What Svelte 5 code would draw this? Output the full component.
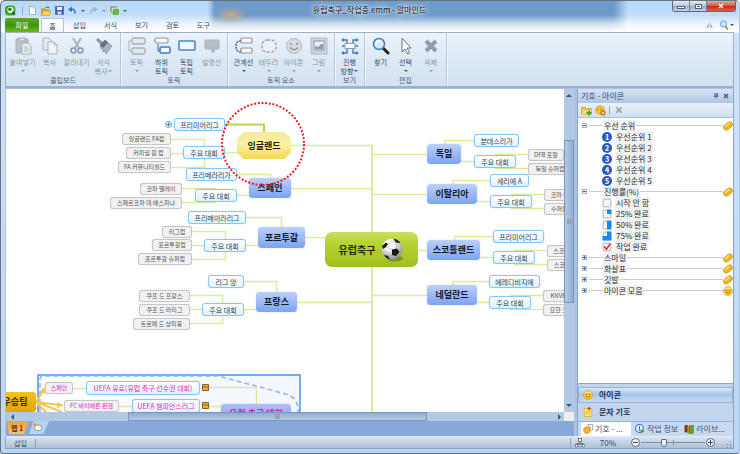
<script lang="ts">
  type Node = { t: string; k: string; x: number; y: number; w: number; h: number }

  let zoom = $state(35)
  let tab = $state('홈')

  const menus = ['삽입', '서식', '보기', '검토', '도구']

  const groups = [
    { label: '클립보드', cell: 27, items: [
      { icon: 'paste', lines: ['붙여넣기'], arrow: true, off: true },
      { icon: 'copy', lines: ['복사'], off: true },
      { icon: 'cut', lines: ['잘라내기'], off: true },
      { icon: 'brush', lines: ['서식', '복사'], arrow: true, off: true },
    ] },
    { label: '토픽', cell: 25, items: [
      { icon: 'topic', lines: ['토픽'], arrow: true, off: true },
      { icon: 'subtopic', lines: ['하위', '토픽'] },
      { icon: 'free', lines: ['독립', '토픽'] },
      { icon: 'callout', lines: ['설명선'], off: true },
    ] },
    { label: '토픽 요소', cell: 25, items: [
      { icon: 'relation', lines: ['관계선'], arrow: true },
      { icon: 'outline', lines: ['테두리'], arrow: true, off: true },
      { icon: 'smile', lines: ['아이콘'], arrow: true, off: true },
      { icon: 'image', lines: ['그림'], arrow: true, off: true },
    ] },
    { label: '보기', cell: 25, items: [
      { icon: 'direction', lines: ['진행', '방향'], arrow: true },
    ] },
    { label: '편집', cell: 25, items: [
      { icon: 'find', lines: ['찾기'] },
      { icon: 'select', lines: ['선택'], arrow: true },
      { icon: 'delete', lines: ['삭제'], arrow: true, off: true },
    ] },
  ] as { label: string; cell: number; items: { icon: string; lines: string[]; arrow?: boolean; off?: boolean }[] }[]

  const n = (k: string, t: string, x: number, y: number, w: number, h: number): Node => ({ t, k, x, y, w, h })

  const nodes: Node[] = [
    n('sub', '프리미어리그', 174, 118, 51, 13),
    n('leaf', '잉글랜드 FA컵', 122, 133, 49, 12),
    n('leaf', '커피월 원 컵', 126, 147, 45, 12),
    n('leaf', 'FA 커뮤니티쉴드', 118, 161, 53, 12),
    n('sub', '주요 대회', 183, 146, 42, 13),
    n('topic hot', '잉글랜드', 237, 132, 54, 27),

    n('sub', '프리메라리가', 186, 168, 51, 13),
    n('topic', '스페인', 249, 178, 42, 20),
    n('leaf', '코파 델레이', 140, 183, 42, 12),
    n('leaf', '스페르코파 데 에스파냐', 110, 197, 72, 12),
    n('sub', '주요 대회', 195, 189, 42, 13),

    n('sub', '프리메이라리그', 188, 211, 58, 13),
    n('leaf', '리그컵', 162, 226, 30, 12),
    n('leaf', '포르투갈컵', 152, 239, 40, 12),
    n('leaf', '포르투갈 슈퍼컵', 138, 253, 54, 12),
    n('sub', '주요 대회', 204, 239, 42, 13),
    n('topic', '포르투갈', 258, 227, 47, 21),

    n('sub', '리그 앙', 208, 275, 36, 13),
    n('leaf', '쿠프 드 프랑스', 139, 290, 51, 12),
    n('leaf', '쿠프 드 라리그', 139, 304, 51, 12),
    n('leaf', '트로페 드 샹피옹', 133, 318, 57, 12),
    n('sub', '주요 대회', 202, 303, 42, 13),
    n('topic', '프랑스', 256, 292, 41, 20),

    n('sub', '분데스리가', 474, 134, 45, 13),
    n('topic', '독일', 427, 144, 34, 20),
    n('sub', '주요 대회', 474, 155, 42, 13),
    n('leaf', 'DFB 포칼', 528, 149, 36, 12),
    n('leaf', '독일 슈퍼컵', 528, 163, 44, 12),

    n('sub', '세리에 A', 490, 174, 39, 13),
    n('topic', '이탈리아', 427, 184, 50, 20),
    n('sub', '주요 대회', 490, 195, 42, 13),
    n('leaf', '코파 이탈리아', 544, 189, 48, 12),
    n('leaf', '수퍼컵 이탈리아', 544, 203, 54, 12),

    n('sub', '프리미어리그', 493, 230, 51, 13),
    n('topic', '스코틀랜드', 427, 240, 53, 20),
    n('sub', '주요 대회', 493, 251, 42, 13),
    n('leaf', '스코티시컵', 547, 245, 40, 12),
    n('leaf', '스코티시리그컵', 547, 259, 52, 12),

    n('sub', '에레디비지에', 489, 275, 51, 13),
    n('topic', '네덜란드', 427, 285, 50, 20),
    n('sub', '주요 대회', 489, 296, 42, 13),
    n('leaf', 'KNVB컵', 543, 290, 36, 12),
    n('leaf', '요한 크루이프', 543, 304, 48, 12),

    n('leaf pink', '스페인', 45, 382, 28, 12),
    n('sub pink', 'UEFA 유로(유럽 축구 선수권 대회)', 86, 381, 114, 14),
    n('leaf pink', 'FC 바이에른 뮌헨', 64, 400, 55, 12),
    n('sub pink', 'UEFA 챔피언스리그', 132, 399, 68, 14),
    n('topic violet', '유럽 축구 대회', 221, 404, 70, 20),
    n('winner', '우승팀', -6, 392, 42, 20),
  ]

  const links = [
    'M171 139.500H204.500V167.500H171M171 153.500H183M225 152.500H237',
    'M237 174.500H270.500V178M237 195.500H249M182 188.500H216M182 202.500H216',
    'M246 217.500H281.500V227M246 245.500H258M192 231.500H225.500V259.500H192M192 245.500H204',
    'M244 281.500H276.500V292M244 309.500H256M190 295.500H222.500V323.500H190M190 309.500H202',
    'M291 145.500H372M291 188.500H372M305 237.500H325M297 302.500H372',
    'M372 154.500H427M372 194.500H427M418 250.500H427M372 295.500H427',
    'M444.500 144V140.500H474M461 161.500H474M495 154.500H528M495 168.500H528',
    'M452.500 184V180.500H490M477 201.500H490M511 194.500H544M511 208.500H544',
    'M454.500 240V236.500H493M480 257.500H493M514 250.500H547M514 264.500H547',
    'M452.500 285V281.500H489M477 302.500H489M510 295.500H543M510 309.500H543',
    'M73 388.500H86M208 387.500H256.500V404M119 406.500H132M208 406.500H221',
  ].join('')

  const tree = [
    { label: '우선 순위', open: true, end: 'clip', items: ['1', '2', '3', '4', '5'].map((v) => ({ icon: 'num', v, label: '우선순위 ' + v })) },
    { label: '진행률(%)', open: true, end: 'clip', items: [
      { icon: 'p0', v: '', label: '시작 안 함' },
      { icon: 'p25', v: '', label: '25% 완료' },
      { icon: 'p50', v: '', label: '50% 완료' },
      { icon: 'p75', v: '', label: '75% 완료' },
      { icon: 'done', v: '', label: '작업 완료' },
    ] },
    { label: '스마일', open: false, end: 'clip', items: [] },
    { label: '화살표', open: false, end: 'clip', items: [] },
    { label: '깃발', open: false, end: 'clip', items: [] },
    { label: '아이콘 모음', open: false, end: 'face', items: [] },
  ]

  const box = '<rect x="2" y="2" width="14" height="14" rx="1" fill="#f4f5f7" stroke="#9aa5b1" stroke-width="1.500"/>'

  // all glyphs are drawn on an 18 x 18 grid
  const icons: Record<string, string> = {
    paste: '<rect x="2" y="2" width="12" height="14" rx="1" fill="#b9c1ca" stroke="#a4adb8"/><rect x="5" y="1" width="6" height="3" fill="#dfe4ea" stroke="#9fa9b4"/><path d="M8 6h6l3 3v8H8z" fill="#e9edf2" stroke="#a9b3be"/><path d="M10 10h4M10 12h5M10 14h5" stroke="#b4bdc7"/>',
    copy: '<path d="M2 1h6l3 3v9H2z" fill="#e4e9ef" stroke="#a9b3be"/><path d="M7 5h6l3 3v9H7z" fill="#f0f3f6" stroke="#a9b3be"/><path d="M13 5v3h3" fill="none" stroke="#a9b3be"/>',
    cut: '<path d="M5 1l6 10M13 1L7 11" stroke="#adb7c3" stroke-width="2.200"/><circle cx="5.500" cy="13.500" r="2.500" fill="none" stroke="#8799ae" stroke-width="1.500"/><circle cx="12.500" cy="13.500" r="2.500" fill="none" stroke="#8799ae" stroke-width="1.500"/>',
    brush: '<path d="M1 3l2-2 5 4-2 3z" fill="#8d99a6"/><path d="M5 8l5-5 7 6-6 8-1-3-2 1 0-3-2 0z" fill="#a9b5c2" stroke="#8592a0" stroke-width=".8"/><path d="M5 8l5-5 3 2.500-5 5.500z" fill="#5f7082"/>',
    topic: '<path d="M4 4H1v10h3" fill="none" stroke="#a6b2bf"/><rect x="4" y="1" width="13" height="6" rx="1.500" fill="#e3e8ed" stroke="#a8b1bb" stroke-width="1.300"/><rect x="4" y="11" width="13" height="6" rx="1.500" fill="#e3e8ed" stroke="#a8b1bb" stroke-width="1.300"/>',
    subtopic: '<path d="M5 7v7h3" fill="none" stroke="#4b83c4" stroke-width="1.200"/><rect x="2" y="1" width="13" height="5" rx="1.500" fill="#f7f7f4" stroke="#92979b" stroke-width="1.200"/><rect x="7" y="10" width="10" height="6" rx="1.500" fill="#f4faff" stroke="#3f7fcd" stroke-width="1.600"/>',
    free: '<rect x="1" y="4" width="16" height="9" rx="1" fill="#f2f7fd" stroke="#4e83c6" stroke-width="1.600"/>',
    callout: '<path d="M3 3h12a1 1 0 0 1 1 1v7a1 1 0 0 1-1 1h-3l-2 4-2-4H3a1 1 0 0 1-1-1V4a1 1 0 0 1 1-1z" fill="#b5bec8" stroke="#a8b2bd"/>',
    relation: '<path d="M6 4C2 4 1 6 1 9s1 6 5 6" fill="none" stroke="#3672b9" stroke-width="1.600" stroke-dasharray="2 1"/><rect x="6" y="1" width="11" height="5" rx="1" fill="#f8f8f5" stroke="#8e9498" stroke-width="1.200"/><rect x="6" y="11" width="11" height="5" rx="1" fill="#f8f8f5" stroke="#8e9498" stroke-width="1.200"/>',
    outline: '<rect x="2" y="3" width="14" height="12" rx="5" fill="#edf1f5" stroke="#9aa9ba" stroke-width="1.500" stroke-dasharray="3 1.500"/>',
    smile: '<circle cx="9" cy="9" r="7.500" fill="#d5dae0" stroke="#b2bac3"/><circle cx="6" cy="7" r="1" fill="#8e98a3"/><circle cx="12" cy="7" r="1" fill="#8e98a3"/><path d="M5 10.500q4 4.500 8 0" fill="none" stroke="#8e98a3" stroke-width="1.300"/>',
    image: '<rect x="1" y="1" width="16" height="16" fill="#cdd3da" stroke="#b3bbc4"/><rect x="4" y="4" width="10" height="9" fill="#eef1f4" stroke="#8f9aa6"/><path d="M5 12V9l3 1 3-3 2 0v5z" fill="#8d9aa8"/>',
    direction: '<path d="M5 9H1M13 9h4M6 6V3H2M12 6V3h4M6 12v4H2M12 12v4h4" fill="none" stroke="#3d7ac2" stroke-width="1.400"/><path d="M3 1v4L0 3zM15 1v4l3-2zM3 14v4l-3-2zM15 14v4l3-2z" fill="#3d7ac2"/><rect x="4" y="6.500" width="10" height="5" fill="#fbfaf4" stroke="#98a1a8"/>',
    find: '<path d="M11 11l5 5" stroke="#222" stroke-width="3" stroke-linecap="round"/><circle cx="7" cy="7" r="5.500" fill="#d6ecfd" stroke="#437fbe" stroke-width="1.500"/><path d="M4 6q2-3 5-2" stroke="#fff" stroke-width="1.500" fill="none"/>',
    select: '<path d="M5 1v14l3-3 2.500 5 2-1-2.300-5H14z" fill="#fff" stroke="#66717c"/>',
    delete: '<path d="M4 4l10 10M14 4L4 14" stroke="#8b9db1" stroke-width="4"/>',
    logo: '<rect x="0" y="1" width="17" height="16" rx="6" fill="#39a32e"/><circle cx="9" cy="8" r="5" fill="#fff"/><circle cx="8" cy="7" r="3" fill="#2b7e2a"/><path d="M12 11l4 5" stroke="#14551c" stroke-width="3"/>',
    fresh: '<path d="M3 1h8l4 4v12H3z" fill="#fff" stroke="#8a98a8" stroke-width="1.300"/><path d="M11 1v4h4" fill="none" stroke="#8a98a8"/>',
    open: '<path d="M1 5h6l2 2h6v9H1z" fill="#e6a11f" stroke="#b97e14"/><path d="M4 9h14l-3 8H1z" fill="#ffd562" stroke="#cf9523"/><path d="M8 4q4-4 7 0" fill="none" stroke="#3d7dd0" stroke-width="2"/>',
    save: '<path d="M1 1h16v16H1z" fill="#3f5fbb" stroke="#2c428f"/><rect x="4" y="2" width="10" height="6" fill="#f1f4fc"/><rect x="5" y="11" width="8" height="6" fill="#cfd9f2"/>',
    undo: '<path d="M5 8q9-5 9 7" fill="none" stroke="#2f74cc" stroke-width="3.200"/><path d="M0 7l8-6v11z" fill="#2f74cc"/>',
    redo: '<path d="M13 8q-9-5-9 7" fill="none" stroke="#9fb2c6" stroke-width="3.200"/><path d="M18 7l-8-6v11z" fill="#9fb2c6"/>',
    layers: '<rect x="1" y="1" width="11" height="10" rx="1" fill="#f2a644" stroke="#a96d20"/><rect x="3" y="4" width="11" height="10" fill="#e4ecf5" stroke="#7890a9"/><rect x="6" y="7" width="11" height="10" rx="1" fill="#6cba3e" stroke="#3c8a24"/>',
    p0: box,
    p25: box + '<path d="M9 1h8v8H9z" fill="#168af2"/>',
    p50: box + '<path d="M9 1h8v16H9z" fill="#168af2"/>',
    p75: box + '<path d="M9 1h8v16H1V9h8z" fill="#168af2"/>',
    done: box + '<path d="M4 8l4 5 7-10" fill="none" stroke="#e02c1b" stroke-width="2.800"/>',
    clip: '<g transform="rotate(-38 9 9)"><rect x="0" y="4" width="18" height="10" rx="5" fill="#f0b51d" stroke="#c68a0c"/><path d="M4 7h10" stroke="#fff2ad" stroke-width="2"/></g>',
    face: '<circle cx="9" cy="9" r="8" fill="#f8c831" stroke="#c98f12"/><path d="M3 6q6-5 12 0" stroke="#fff0a8" stroke-width="2" fill="none"/><circle cx="6" cy="8" r="1.200" fill="#8a5a08"/><circle cx="12" cy="8" r="1.200" fill="#8a5a08"/><path d="M5 11q4 4 8 0" fill="none" stroke="#8a5a08" stroke-width="1.300"/>',
    folder: '<path d="M1 4h6l2 2h8v9H1z" fill="#edc04a" stroke="#b98a1c"/><path d="M3 8h14l-2 7H1z" fill="#fbdc79"/><path d="M13 9v8M9 13h8" stroke="#3ba32b" stroke-width="3"/>',
    faceAdd: '<circle cx="8" cy="8" r="7" fill="#f8c831" stroke="#c98f12"/><path d="M4 7h2M9 7h2" stroke="#8a5a08" stroke-width="1.500"/><circle cx="13" cy="13" r="4" fill="#f08a1c" stroke="#b55b08"/><path d="M13 11v4M11 13h4" stroke="#fff"/>',
    note: '<rect x="2" y="3" width="14" height="14" fill="#fae36f" stroke="#c7a32d"/><path d="M5 8h8M5 11h8" stroke="#c7a32d"/><circle cx="11" cy="3" r="2.500" fill="#d63a28"/>',
    symbols: '<rect x="9" y="1" width="8" height="10" fill="#fff" stroke="#777"/><path d="M13 3v6" stroke="#b33"/><circle cx="7" cy="11" r="6" fill="#f5b52a" stroke="#b57c10"/>',
    info: '<circle cx="8" cy="8" r="7" fill="#e7f3fd" stroke="#2f78bd" stroke-width="2"/><path d="M8 4v8" stroke="#2f78bd" stroke-width="2"/><path d="M10 9l7 4-7 4z" fill="#39a32e"/>',
    books: '<rect x="1" y="2" width="6" height="13" fill="#7a3520"/><rect x="6" y="4" width="5" height="13" fill="#e67c1f"/><rect x="10" y="3" width="7" height="14" fill="#58a832" stroke="#3c7b22"/>',
    org: '<path d="M9 6v5M3 13v-3h12v3" fill="none" stroke="#4a5868" stroke-width="1.300"/><rect x="6" y="1" width="6" height="5" fill="#fff" stroke="#4a5868" stroke-width="1.300"/><rect x="1" y="12" width="4" height="4" fill="#fff" stroke="#4a5868"/><rect x="7" y="12" width="4" height="4" fill="#fff" stroke="#4a5868"/><rect x="13" y="12" width="4" height="4" fill="#fff" stroke="#4a5868"/>',
    lens: '<path d="M11 11l5 6" stroke="#d08a2e" stroke-width="3.500"/><circle cx="8" cy="7" r="5.500" fill="#c4e8fb" stroke="#6ba3cc" stroke-width="1.800"/>',
    up: '<path d="M3 10l6-6 6 6v4l-6-4-6 4z" fill="#fff" stroke="#56616d" stroke-width="1.500"/>',
    x: '<path d="M3 3l12 12M15 3L3 15" stroke="currentColor" stroke-width="3.500"/>',
    pin: '<path d="M5 2h8v8H5zM2 10h14M9 10v7" fill="none" stroke="currentColor" stroke-width="2"/><path d="M10 2h3v8h-3z" fill="currentColor"/>',
    addMap: '<rect x="4" y="5" width="12" height="9" rx="4" fill="#f2f5fa" stroke="#65778f"/><path d="M5 1v7M1 4.500h8" stroke="#f19b25" stroke-width="2"/>',
  }
</script>

{#snippet icon(name: string, size: number)}
  <svg class="icon" viewBox="0 0 18 18" width={size} height={size} aria-hidden="true">{@html icons[name]}</svg>
{/snippet}

<div class="window">
  <header class="titlebar">
    <div class="quick">
      {@render icon('logo', 11)}
      <i class="bar"></i>
      <button aria-label="새로 만들기">{@render icon('fresh', 9)}</button>
      <button aria-label="열기">{@render icon('open', 10)}</button>
      <button aria-label="저장">{@render icon('save', 9)}</button>
      <button aria-label="실행 취소">{@render icon('undo', 9)}<i class="caret"></i></button>
      <button aria-label="다시 실행">{@render icon('redo', 9)}<i class="caret pale"></i></button>
      <button aria-label="맵 복사">{@render icon('layers', 9)}<i class="caret"></i></button>
    </div>
    <h1>유럽축구_작업중.emm - 알마인드</h1>
    <div class="controls">
      <button aria-label="최소화"><i class="min"></i></button>
      <button aria-label="최대화"><i class="max"></i></button>
      <button class="close" aria-label="닫기">{@render icon('x', 6)}</button>
    </div>
  </header>

  <nav class="tabs">
    <button class="file">파일</button>
    <button class="home" class:active={tab === '홈'} onclick={() => (tab = '홈')}>홈</button>
    {#each menus as m}
      <button class:active={tab === m} onclick={() => (tab = m)}>{m}</button>
    {/each}
    <span class="help">
      <button aria-label="리본 최소화">{@render icon('up', 7)}</button>
      <button aria-label="도움말">{@render icon('lens', 10)}<i class="caret"></i></button>
    </span>
  </nav>

  <section class="ribbon">
    {#each groups as g}
      <div class="group">
        <div class="tools">
          {#each g.items as it}
            <button class="tool" class:off={it.off} style:width={g.cell + 'px'}>
              {@render icon(it.icon, 18)}
              {#each it.lines as line, i}
                <span>{line}{#if i === 1 && it.arrow}<i class="caret"></i>{/if}</span>
              {/each}
              {#if it.arrow && it.lines.length === 1}<span><i class="caret"></i></span>{/if}
            </button>
          {/each}
        </div>
        <div class="caption">{g.label}</div>
      </div>
    {/each}
  </section>

  <main class="work">
    <div class="editor">
      <div class="view">
        <div class="canvas">
          <div class="sheet">
            <svg class="layer" width="740" height="454" viewBox="0 0 740 454" fill="none">
              <defs>
                <linearGradient id="sel" x2="1"><stop offset="0" stop-color="#fff" /><stop offset="1" stop-color="#f1f7fe" /></linearGradient>
              </defs>
              <rect x="38" y="375" width="262" height="60" fill="url(#sel)" stroke="#4593ee" stroke-width="1.500" />
              <path d="M40 412V379Q40 376 43 376H218L286 394Q299 398 298 412" stroke="#92b5d7" stroke-width="1.500" stroke-dasharray="5 3" />
              <path d={links} stroke="#dcea9b" stroke-width="1.500" />
              <path d="M372 145V420" stroke="#dcea9b" stroke-width="2" />
              <path d="M225 124.500H264V132" stroke="#b5d944" stroke-width="2" />
              <g stroke="#f5c64e" stroke-width="2">
                <path d="M36 402L43 391M36 402L60 405M36 402L62 412M36 402L48 414" />
                <path d="M40 390L46 387L45 394zM57 402L64 405L57 408z" fill="#f5c64e" stroke="none" />
              </g>
              <circle cx="168.500" cy="124.500" r="3" fill="#eef8fd" stroke="#62add2" />
              <path d="M166.500 124.500h4M168.500 122.500v4" stroke="#3c8ebb" />
              <g fill="#e9b24a" stroke="#8f5f20">
                <path d="M202.500 384.500h6v6h-6zM202.500 402.500h6v6h-6z" />
                <path d="M203 387h5M203 405h5" />
              </g>
            </svg>

            {#each nodes as d}
              <div class="node {d.k}" style:left={d.x + 'px'} style:top={d.y + 'px'} style:width={d.w + 'px'} style:height={d.h + 'px'}>{d.t}</div>
            {/each}

            <div class="root">
              유럽축구
              <svg width="24" height="24" viewBox="0 0 24 24" aria-hidden="true">
                <defs>
                  <radialGradient id="ball" cx=".4" cy=".3" r=".7"><stop offset=".3" stop-color="#fff" /><stop offset="1" stop-color="#8c9094" /></radialGradient>
                  <clipPath id="ballClip"><circle cx="12" cy="11" r="10.500" /></clipPath>
                </defs>
                <ellipse cx="15" cy="20.500" rx="8" ry="3" fill="#5d7311" opacity=".6" />
                <circle cx="12" cy="11" r="10.500" fill="url(#ball)" />
                <g clip-path="url(#ballClip)">
                  <path d="M12 11.500L17 10.500L19.500 14L16 18L12 17zM13 0L19 1.500L20 5L16 4.500zM2 8L6 4.500L8 6L6 9L3 11zM4 17L8 18L10 21.500L6 20z" fill="#16181a" />
                  <path d="M12 11.500L6 9M17 10.500L16 4.500M8 6L13 3L16 4.500M12 17L8 18M19.500 14L22 13" fill="none" stroke="#9da0a3" stroke-width=".6" />
                </g>
              </svg>
            </div>

            <svg class="layer" width="740" height="454" viewBox="0 0 740 454" fill="none">
              <circle cx="263" cy="144" r="41" stroke="#ee1c24" stroke-width="2" stroke-dasharray="2 1.680" />
            </svg>
          </div>
        </div>
        <div class="vscroll"><i class="arrow up"></i><div class="rail"><div class="thumb"></div></div><i class="arrow down"></i></div>
      </div>
      <div class="hscroll">
        <i class="arrow left"></i><div class="rail"><div class="thumb"></div></div><i class="arrow right"></i><div class="corner"></div>
      </div>
      <div class="maps">
        <button class="map">맵 1</button>
        <button class="addmap" aria-label="맵 추가">{@render icon('addMap', 11)}</button>
      </div>
    </div>

    <aside class="panel">
      <div class="phead">
        <span>기호 - 아이콘</span>
        <button aria-label="고정">{@render icon('pin', 6)}</button>
        <button aria-label="닫기">{@render icon('x', 6)}</button>
      </div>
      <div class="pbar">
        <button aria-label="폴더 추가">{@render icon('folder', 11)}</button>
        <button aria-label="아이콘 추가">{@render icon('faceAdd', 11)}</button>
        <i class="bar"></i>
        <button class="gray" aria-label="삭제">{@render icon('x', 8)}</button>
      </div>
      <ul class="tree">
        {#each tree as g}
          <li>
            <div class="branch">
              <i class="box" class:plus={!g.open}></i><i class="stub"></i><span>{g.label}</span><i class="rule"></i>
              {@render icon(g.end, 10)}
            </div>
            {#each g.items as it}
              <div class="item">
                {#if it.icon === 'num'}<b>{it.v}</b>{:else}{@render icon(it.icon, 10)}{/if}
                <span>{it.label}</span>
              </div>
            {/each}
          </li>
        {/each}
      </ul>
      <div class="stack">
        <button class="on">{@render icon('face', 10)}아이콘</button>
        <button>{@render icon('note', 10)}문자 기호</button>
      </div>
      <div class="ptabs">
        <button class="on">{@render icon('symbols', 10)}기호 - ...</button>
        <button>{@render icon('info', 10)}작업 정보</button>
        <button>{@render icon('books', 10)}라이브...</button>
      </div>
    </aside>
  </main>

  <footer class="status">
    <span class="mode">삽입</span>
    <div class="zoom">
      {@render icon('org', 10)}
      <label for="zoom">70%</label>
      <button aria-label="축소"><i class="h"></i></button>
      <input id="zoom" type="range" min="0" max="100" bind:value={zoom} />
      <button aria-label="확대"><i class="h"></i><i class="v"></i></button>
      <svg class="grip" width="7" height="7" viewBox="0 0 7 7" aria-hidden="true">
        <path d="M5 0h1v1h-1zM5 3h1v1h-1zM5 6h1v1h-1zM2 3h1v1h-1zM2 6h1v1h-1z" fill="#71849c" />
      </svg>
    </div>
  </footer>
</div>

<style>
  :global(body) {
    margin: 0;
  }
  .window {
    display: flex;
    flex-direction: column;
    box-sizing: border-box;
    min-height: 100vh;
    padding: 0 5px 4px 4px;
    border: 1px solid #67727f;
    border-right-color: #a9c4e2;
    border-radius: 5px 5px 3px 3px;
    font: 7px/8px 'Noto Sans CJK KR', sans-serif;
    color: #33496a;
    background:
      radial-gradient(closest-side, #c0a98c, transparent) 213px 5px / 34px 18px no-repeat,
      linear-gradient(to bottom, transparent 0 14px, #ffffffb0 23px, #fff 31px, transparent 32px),
      linear-gradient(to right, transparent 28%, #6d9ac9 29% 83%, transparent 85%) 0 0 / 100% 32px no-repeat,
      linear-gradient(to bottom, #b7dafb 0, #cfe3f8 32px, #b8d6f5 100%);
  }
  button {
    display: flex;
    align-items: center;
    margin: 0;
    padding: 0;
    border: none;
    background: none;
    font: inherit;
    color: inherit;
  }
  .icon {
    display: block;
    flex: none;
  }
  .caret {
    display: inline-block;
    flex: none;
    margin-left: 4px;
    border: 2px solid transparent;
    border-top-color: #46566a;
    border-bottom: none;
  }
  .pale {
    opacity: .5;
  }
  .bar {
    width: 1px;
    height: 8px;
    background: #8fa6c0;
  }

  .titlebar {
    display: grid;
    grid-template-columns: 1fr auto 1fr;
    height: 17px;
  }
  .quick {
    display: flex;
    align-items: center;
    gap: 4px;
    padding-top: 1px;
  }
  .quick .bar {
    margin: 0 1px 0 2px;
  }
  h1 {
    margin: 0;
    font-size: 8px;
    font-weight: 400;
    line-height: 18px;
    color: #10151c;
    text-shadow: 0 0 3px #fff, 0 0 6px #fff, 0 0 8px #fff;
  }
  .controls {
    display: flex;
    justify-self: end;
    height: 11px;
    margin-right: -2px;
    border: 1px solid #586a80;
    border-top: none;
    border-radius: 0 0 3px 3px;
    box-sizing: border-box;
    overflow: hidden;
  }
  .controls button {
    justify-content: center;
    width: 17px;
    border-right: 1px solid #71849b;
    background: linear-gradient(#e2ebf5, #bccbdc 45%, #98abc2 50%, #c3d3e4);
  }
  .controls .close {
    width: 28px;
    border: none;
    color: #fff;
    background: linear-gradient(#e9a99c, #d3614e 45%, #b92c17 50%, #d9624a);
  }
  .min {
    width: 6px;
    height: 1px;
    margin-top: 3px;
    border: 1px solid #556270;
    background: #fff;
  }
  .max {
    width: 3px;
    height: 1px;
    border: 1px solid #fff;
    outline: 1px solid #556270;
    background: #556270;
  }

  .tabs {
    display: flex;
    height: 14px;
  }
  .tabs > button {
    justify-content: center;
    width: 31px;
  }
  .tabs .file {
    width: 34px;
    margin-right: 2px;
    border-radius: 2px 2px 0 0;
    color: #fff;
    background: linear-gradient(#5cab22, #3f9310 50%, #6cb81c);
  }
  .tabs .home {
    width: 23px;
  }
  .tabs .active {
    border: 1px solid #a9c3df;
    border-bottom: none;
    border-radius: 2px 2px 0 0;
    box-sizing: border-box;
    background: linear-gradient(#fff, #f0f6fd);
  }
  .help {
    display: flex;
    gap: 6px;
    margin-left: auto;
  }
  .help .caret {
    margin-left: 1px;
  }

  .ribbon {
    display: flex;
    box-sizing: border-box;
    height: 56px;
    border: 1px solid #9db1c8;
    border-width: 1px 1px 2px;
    background: linear-gradient(#ecf4fd, #dce8f5 50%, #d4e1f0);
  }
  .group {
    display: flex;
    flex-direction: column;
    justify-content: space-between;
    padding: 4px 3px 1px;
    border-right: 1px solid #b4c7dd;
    box-shadow: 1px 0 #f3f8fd;
  }
  .group:nth-child(4) {
    padding-left: 2px;
    padding-right: 2px;
  }
  .tools {
    display: flex;
    align-items: flex-start;
  }
  .tool {
    flex-direction: column;
    white-space: nowrap;
  }
  .tool .icon {
    margin-bottom: 2px;
  }
  .tool span {
    display: flex;
    align-items: center;
    min-height: 9px;
  }
  .tool .caret {
    margin-left: 2px;
  }
  .tool span .caret:only-child {
    margin-left: 2px;
  }
  .tool span:last-child:not(:nth-child(2)) .caret:first-child:last-child {
    margin-left: 1px;
  }
  .off {
    color: #8b96a3;
  }
  .off .caret {
    opacity: .5;
  }
  .caption {
    line-height: 10px;
    text-align: center;
    color: #476080;
  }

  .work {
    display: flex;
    flex: 1;
    padding-top: 1px;
    background: #a9c4e6;
  }
  .editor {
    display: flex;
    flex: 1;
    flex-direction: column;
    min-width: 0;
    padding-left: 1px;
  }
  .view {
    display: flex;
    flex: 1;
    min-height: 200px;
  }
  .canvas {
    position: relative;
    flex: 1;
    overflow: hidden;
    background: #fff;
  }
  .sheet {
    position: absolute;
    left: -6px;
    top: -89px;
  }
  .layer {
    position: absolute;
    left: 0;
    top: 0;
  }
  .node {
    position: absolute;
    display: flex;
    align-items: center;
    justify-content: center;
    box-sizing: border-box;
    white-space: nowrap;
  }
  .sub {
    border: 1px solid #86c6f5;
    border-radius: 3px;
    color: #333f4a;
    background: linear-gradient(#fff, #dff1ff);
    box-shadow: 0 0 1px #86c6f5;
  }
  .leaf {
    border: 1px solid #c6c6c6;
    border-radius: 3px;
    font-size: 6px;
    color: #555;
    background: #f1f1f1;
    box-shadow: 0 0 1px #c6c6c6;
  }
  .topic {
    border-radius: 4px;
    font-size: 9px;
    font-weight: 700;
    color: #0f1826;
    background: linear-gradient(#bdd0fb, #7ba4f2);
    box-shadow: 0 0 1px #6f94dd;
  }
  .hot {
    color: #1d1b08;
    background: linear-gradient(#f4ea9c, #fbf0a4 45%, #f3d94f);
    clip-path: polygon(7px 0, calc(100% - 7px) 0, 100% 6px, 100% calc(100% - 6px), calc(100% - 7px) 100%, 7px 100%, 0 calc(100% - 6px), 0 6px);
  }
  .pink {
    color: #e326c5;
  }
  .violet {
    color: #d01cc0;
    background: linear-gradient(#b3bdf4, #8a9cf0);
  }
  .winner {
    border-radius: 3px;
    font-size: 9px;
    font-weight: 700;
    color: #3a2500;
    background: linear-gradient(#f2c31b, #dfa50a);
  }
  .root {
    position: absolute;
    left: 325px;
    top: 232px;
    display: flex;
    align-items: center;
    justify-content: center;
    gap: 5px;
    width: 93px;
    height: 35px;
    border-radius: 7px;
    font-size: 10px;
    font-weight: 700;
    color: #1d2a05;
    background: linear-gradient(#cbe062, #b3d32f 35%, #a2bf22);
  }

  .vscroll,
  .hscroll {
    display: flex;
    align-items: center;
    background: #b2c8e3;
  }
  .vscroll {
    flex-direction: column;
    width: 10px;
    padding: 5px 0;
    box-sizing: border-box;
  }
  .hscroll {
    height: 9px;
    padding-left: 5px;
  }
  .rail {
    flex: 1;
    align-self: stretch;
  }
  .thumb {
    box-sizing: border-box;
    border: 1px solid #7b96ba;
  }
  .vscroll .thumb {
    height: 53%;
    margin-top: 43px;
    background:
      linear-gradient(#9aa3ad, #9aa3ad) center / 5px 5px no-repeat,
      linear-gradient(to right, #b3c9e4, #8faed3);
  }
  .hscroll .thumb {
    width: 55%;
    height: 9px;
    margin-left: 21%;
    background:
      linear-gradient(#9aa3ad, #9aa3ad) center / 5px 5px no-repeat,
      linear-gradient(#8faed3, #b3c9e4);
  }
  .arrow {
    border: 3px solid transparent;
  }
  .up {
    border-top: none;
    border-bottom-color: #45556a;
  }
  .down {
    border-bottom: none;
    border-top-color: #45556a;
  }
  .left {
    border-left: none;
    border-right-color: #45556a;
  }
  .right {
    margin-right: 3px;
    border-right: none;
    border-left-color: #45556a;
  }
  .corner {
    width: 10px;
    height: 9px;
    background: #eee;
  }
  .maps {
    display: flex;
    height: 15px;
    padding: 0 1px;
    background: #87a9d8;
  }
  .map {
    height: 13px;
    padding: 0 6px 0 4px;
    font-weight: 700;
    color: #5a3205;
    background: linear-gradient(#f79d3f, #fdbf70);
    clip-path: polygon(0 0, 100% 0, calc(100% - 5px) 100%, 2px 100%);
  }
  .addmap {
    width: 20px;
    height: 13px;
    padding-left: 3px;
    background: #b6d2f5;
    clip-path: polygon(4px 0, 100% 0, calc(100% - 6px) 100%, 0 100%);
  }

  .panel {
    display: flex;
    flex-direction: column;
    width: 157px;
    margin-left: 3px;
    border-left: 1px solid #8ba5c6;
    border-right: 1px solid #8ba5c6;
    box-sizing: border-box;
    font-size: 8px;
    color: #2c2f33;
    background: #c3d5ec;
  }
  .phead {
    display: flex;
    align-items: center;
    gap: 4px;
    height: 14px;
    padding: 0 4px 0 3px;
    color: #33507f;
    background: linear-gradient(#d8e4f3, #b0c6e1);
  }
  .phead span {
    flex: 1;
  }
  .pbar {
    display: flex;
    align-items: center;
    gap: 3px;
    height: 14px;
    padding-left: 3px;
    border-bottom: 1px solid #a9bdd6;
    background: linear-gradient(#eaf2fb, #cfdef0);
  }
  .gray {
    margin-left: 2px;
    color: #9aa6b5;
  }
  .tree {
    flex: 1;
    margin: 0 0 3px;
    padding: 2px 0 0;
    border-bottom: 1px solid #8ba5c6;
    list-style: none;
    line-height: 11px;
    background: #fff;
  }
  .branch,
  .item {
    display: flex;
    align-items: center;
    height: 11px;
  }
  .branch {
    padding-left: 4px;
  }
  .item {
    gap: 3px;
    padding-left: 24px;
  }
  .branch span,
  .item span {
    padding: 0 1px;
    background: #f1f1f1;
  }
  .box {
    width: 5px;
    height: 5px;
    box-sizing: border-box;
    border: 1px solid #a4b1c1;
    background: linear-gradient(#3d68a8, #3d68a8) center / 3px 1px no-repeat;
  }
  .plus {
    background:
      linear-gradient(#3d68a8, #3d68a8) center / 3px 1px no-repeat,
      linear-gradient(#3d68a8, #3d68a8) center / 1px 3px no-repeat;
  }
  .stub,
  .rule {
    height: 1px;
    background: #c9cdd2;
  }
  .stub {
    width: 14px;
    margin-left: 2px;
  }
  .rule {
    flex: 1;
  }
  .item b {
    width: 10px;
    height: 10px;
    border-radius: 50%;
    font-size: 7px;
    line-height: 10px;
    text-align: center;
    color: #fff;
    background: radial-gradient(#2d66cf 30%, #173a99);
  }
  .stack button {
    gap: 6px;
    width: 100%;
    height: 18px;
    padding-left: 5px;
    font-weight: 700;
    color: #1e3658;
  }
  .stack .on {
    height: 16px;
    border: 1px solid #96b2d6;
    padding-left: 4px;
    background: linear-gradient(#dbe8f7, #a9c5e8 45%, #c7dbf3);
  }
  .ptabs {
    display: flex;
    gap: 2px;
    height: 14px;
    padding-left: 3px;
    border-top: 1px solid #8fb1e6;
    background: #c9daf0;
  }
  .ptabs button {
    gap: 2px;
    padding: 0 2px;
    color: #3c5270;
    white-space: nowrap;
  }
  .ptabs .on {
    width: 50px;
    box-sizing: border-box;
    background: #fff;
  }

  .status {
    display: flex;
    align-items: center;
    justify-content: space-between;
    height: 13px;
    border: 1px solid #8da3bd;
    border-top-color: #e4ecf6;
    box-sizing: border-box;
    background: linear-gradient(#d9e4f2, #aebfd4);
  }
  .mode {
    padding: 0 8px;
    border-right: 1px solid #8ea1b9;
  }
  .zoom {
    display: flex;
    align-items: center;
    padding-left: 4px;
    border-left: 1px solid #8ea1b9;
    font-size: 8px;
  }
  .zoom .icon {
    margin-right: 15px;
  }
  .zoom label {
    margin-right: 15px;
  }
  .zoom button {
    position: relative;
    justify-content: center;
    width: 9px;
    height: 9px;
    border: 1px solid #5d6c7e;
    border-radius: 50%;
    background: #f4f7fb;
  }
  .zoom .h {
    width: 5px;
    height: 1px;
    background: #39485a;
  }
  .zoom .v {
    position: absolute;
    width: 1px;
    height: 5px;
    background: #39485a;
  }
  input[type='range'] {
    -webkit-appearance: none;
    appearance: none;
    width: 64px;
    height: 9px;
    margin: 0 1px;
    background:
      linear-gradient(#7d8fa6, #7d8fa6) center / 1px 5px no-repeat,
      linear-gradient(#7d8fa6, #7d8fa6) center / 100% 1px no-repeat;
  }
  input::-webkit-slider-thumb {
    -webkit-appearance: none;
    width: 6px;
    height: 8px;
    border: 1px solid #5d6c7e;
    border-radius: 1px 1px 3px 3px;
    background: #eef3f9;
  }
  .grip {
    margin: 3px 1px 0 10px;
  }
</style>
